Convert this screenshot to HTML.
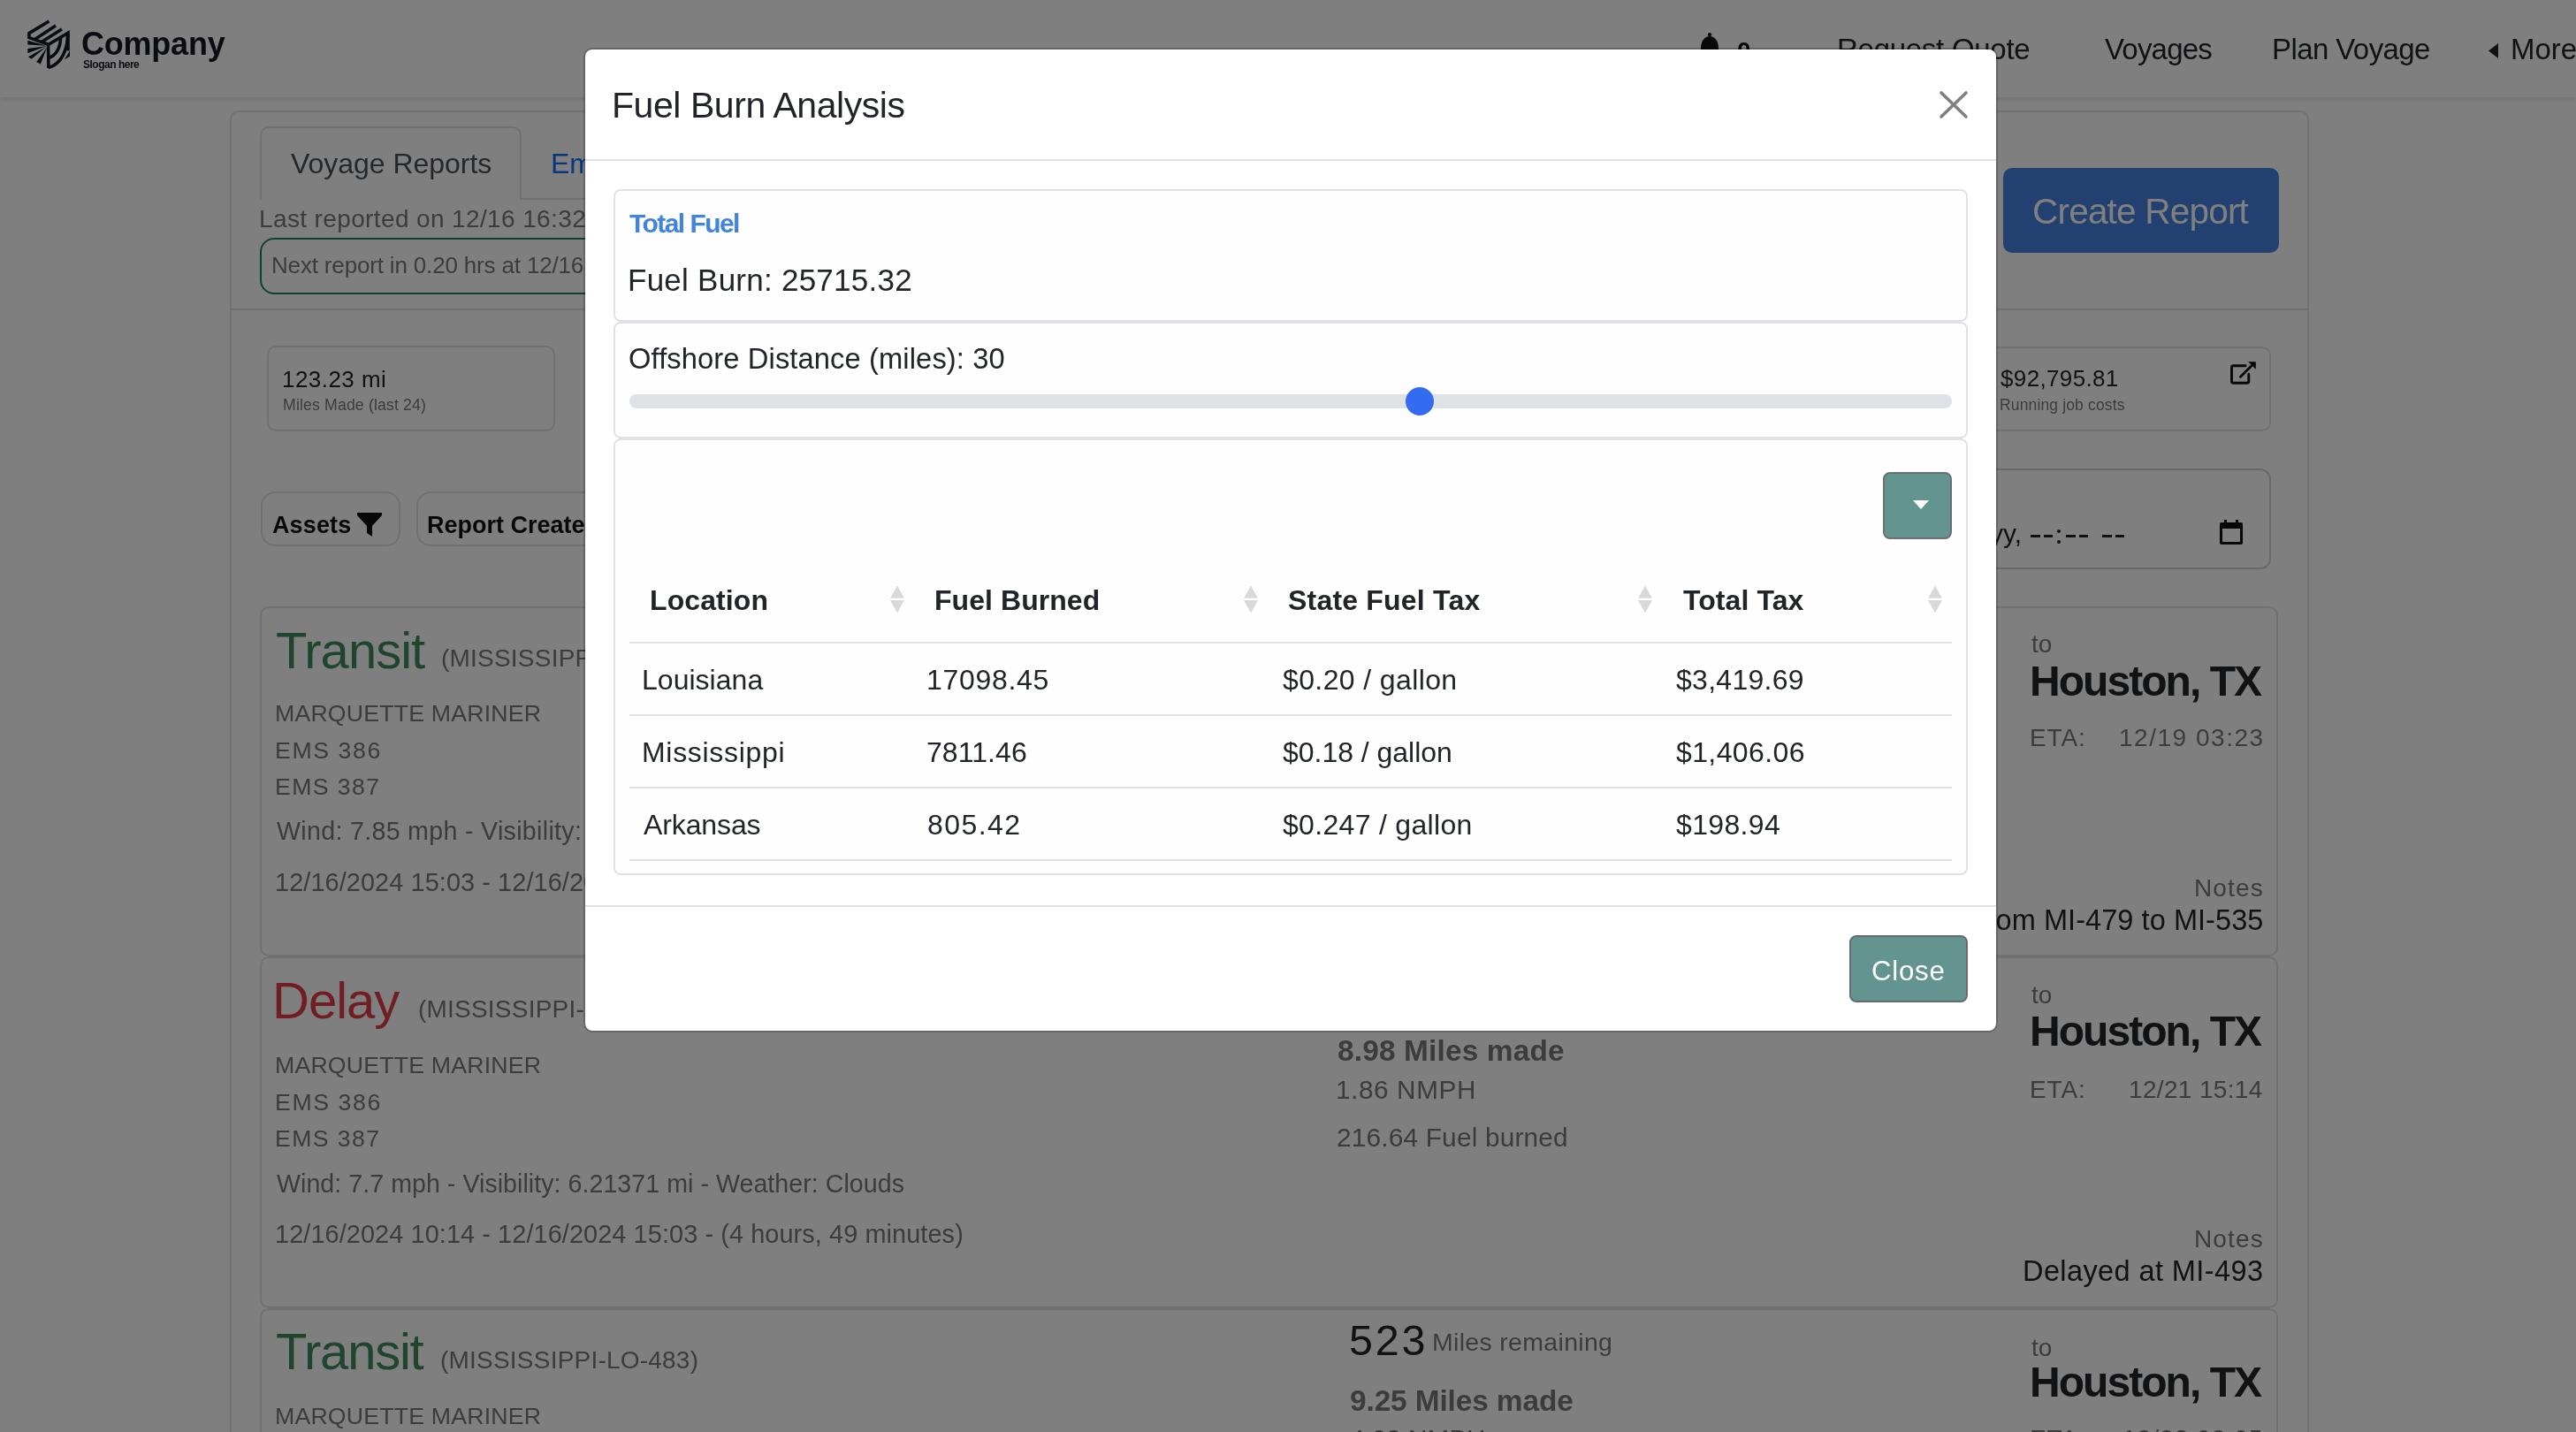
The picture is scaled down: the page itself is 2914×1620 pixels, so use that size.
<!DOCTYPE html><html><head><meta charset="utf-8"><style>
html,body{margin:0;padding:0;width:2914px;height:1620px;overflow:hidden;background:#fff;}
body{position:relative;font-family:"Liberation Sans",sans-serif;}
.t{position:absolute;white-space:nowrap;will-change:transform;}
.r{position:absolute;box-sizing:border-box;}
svg{position:absolute;overflow:visible;}
</style></head><body>
<script>(function(){var w=window.innerWidth;if(w&&Math.abs(w-2914)>2){document.documentElement.style.zoom=(w/2914);}})();</script>
<div class="r" style="left:0px;top:0px;width:2914px;height:110px;background:#fff;box-shadow:0 3px 6px rgba(0,0,0,0.10);"></div>
<div class="r" style="left:19px;top:14px;width:244px;height:79px;background:#fff;border-radius:16px;"></div>
<svg width="60" height="64" viewBox="0 0 60 64" style="left:26px;top:18px">
<g fill="none" stroke="#141922" stroke-width="3.6" stroke-linejoin="miter">
<polyline points="29.5,6 6.9,19.6 6.9,24.6 28.6,32.3"/>
<line x1="13.5" y1="26.5" x2="37" y2="11"/>
<line x1="21" y1="29.5" x2="44" y2="15"/>
<polyline points="28.6,32.5 51,19.2 51,39.5"/>
<line x1="28.6" y1="33" x2="28.9" y2="59"/>
<path d="M50.6,20 C50.5,38 44,54 28.9,58.5"/>
<path d="M42.6,24 C42.5,35 38,45 29,47.5"/>
</g>
<g fill="#141922">
<polygon points="26.8,33.8 5.3,27.7 5.3,32.5"/>
<polygon points="26.8,34 5.3,37 5.3,42.2"/>
<polygon points="27,34.5 5.8,46.2 9.6,48.8"/>
<polygon points="27.5,35 15.2,52 19.8,54.6"/>
<polygon points="46.8,49.5 53,39.3 53,45.8"/>
</g>
</svg>
<div class="t" style="left:91.5px;top:31.8px;font-size:36px;line-height:36px;color:#141922;font-weight:bold;letter-spacing:-0.217px;">Company</div>
<div class="t" style="left:93.6px;top:66.8px;font-size:12px;line-height:12px;color:#141922;font-weight:bold;letter-spacing:-0.490px;">Slogan here</div>
<svg style="left:1920px;top:34px" width="28" height="34" viewBox="0 0 28 34">
<g fill="#111"><circle cx="14" cy="5.2" r="2.1"/><path d="M4,21 C4,12 8.5,7 14,7 C19.5,7 24,12 24,21 L24,34 L4,34 Z"/></g></svg>
<div class="t" style="left:1964.5px;top:43.8px;font-size:28px;line-height:28px;color:#111;font-weight:bold;">0</div>
<div class="t" style="left:2077.8px;top:38.7px;font-size:33px;line-height:33px;color:#212529;letter-spacing:-0.275px;">Request Quote</div>
<div class="t" style="left:2381.1px;top:38.7px;font-size:33px;line-height:33px;color:#212529;letter-spacing:-0.817px;">Voyages</div>
<div class="t" style="left:2569.6px;top:38.7px;font-size:33px;line-height:33px;color:#212529;letter-spacing:-0.590px;">Plan Voyage</div>
<svg style="left:2815px;top:49px" width="11" height="17" viewBox="0 0 11 17"><polygon points="11,0 11,17 0,8.5" fill="#212529"/></svg>
<div class="t" style="left:2840.3px;top:38.7px;font-size:33px;line-height:33px;color:#212529;">More</div>
<div class="r" style="left:260px;top:125px;width:2352px;height:1575px;border:2px solid #dee2e6;border-radius:10px;"></div>
<div class="r" style="left:262px;top:349px;width:2348px;height:2px;background:#dee2e6;"></div>
<div class="r" style="left:590px;top:224px;width:910px;height:2px;background:#dee2e6;"></div>
<div class="r" style="left:294px;top:143px;width:296px;height:83px;border:2px solid #dee2e6;border-bottom:none;border-radius:10px 10px 0 0;background:#fff;"></div>
<div class="t" style="left:328.8px;top:169.4px;font-size:32px;line-height:32px;color:#495057;letter-spacing:-0.031px;">Voyage Reports</div>
<div class="t" style="left:623.4px;top:169.4px;font-size:32px;line-height:32px;color:#0d6efd;">Emissions</div>
<div class="t" style="left:293.2px;top:233.9px;font-size:28px;line-height:28px;color:#787878;letter-spacing:0.374px;">Last reported on 12/16 16:32</div>
<div class="r" style="left:294px;top:269px;width:706px;height:64px;border:2px solid #198754;border-radius:16px;"></div>
<div class="t" style="left:306.9px;top:287.0px;font-size:26px;line-height:26px;color:#787878;letter-spacing:-0.165px;">Next report in 0.20 hrs at 12/16 16:44</div>
<div class="r" style="left:2266px;top:190px;width:312px;height:96px;background:#4482e0;border-radius:10px;"></div>
<div class="t" style="left:2299.0px;top:218.7px;font-size:40.5px;line-height:40.5px;color:#fff;letter-spacing:-0.792px;">Create Report</div>
<div class="r" style="left:302px;top:391px;width:326px;height:97px;border:2px solid #dee2e6;border-radius:10px;"></div>
<div class="t" style="left:319.0px;top:415.7px;font-size:26px;line-height:26px;color:#212529;letter-spacing:0.450px;">123.23 mi</div>
<div class="t" style="left:319.6px;top:450.0px;font-size:17.7px;line-height:17.7px;color:#787878;letter-spacing:0.142px;">Miles Made (last 24)</div>
<div class="r" style="left:2200px;top:392px;width:369px;height:96px;border:2px solid #dee2e6;border-radius:10px;"></div>
<div class="t" style="left:2262.7px;top:415.3px;font-size:26px;line-height:26px;color:#212529;letter-spacing:0.356px;">$92,795.81</div>
<div class="t" style="left:2261.6px;top:449.8px;font-size:17.5px;line-height:17.5px;color:#787878;letter-spacing:0.144px;">Running job costs</div>
<svg style="left:2510px;top:400px" width="50" height="40" viewBox="0 0 50 40">
<g fill="none" stroke="#111" stroke-width="2.9" stroke-linecap="round" stroke-linejoin="round">
<path d="M30,13.7 L16.2,13.7 Q14.5,13.7 14.5,15.4 L14.5,31.5 Q14.5,33.2 16.2,33.2 L32.1,33.2 Q33.8,33.2 33.8,31.5 L33.8,23.5"/>
<path d="M24.5,26.3 L37,13.8"/>
</g>
<polygon points="33.2,9.3 41.8,9.3 41.8,17.8" fill="#111"/></svg>
<div class="r" style="left:295px;top:556px;width:158px;height:62px;border:2px solid #dee2e6;border-radius:16px;"></div>
<div class="t" style="left:308.3px;top:581.1px;font-size:27px;line-height:27px;color:#111;font-weight:bold;letter-spacing:0.120px;">Assets</div>
<svg style="left:404px;top:580px" width="28" height="28" viewBox="0 0 28 28"><path d="M0,0 L28,0 L28,3 L17,15 L17,27 L11,23 L11,15 L0,3 Z" fill="#111"/></svg>
<div class="r" style="left:471px;top:556px;width:429px;height:62px;border:2px solid #dee2e6;border-radius:16px;"></div>
<div class="t" style="left:483.2px;top:581.1px;font-size:27px;line-height:27px;color:#111;font-weight:bold;">Report Created</div>
<div class="r" style="left:2100px;top:530px;width:469px;height:114px;border:2px solid #ced4da;border-radius:12px;"></div>
<div class="t" style="left:2120.6px;top:589.2px;font-size:30px;line-height:30px;color:#212529;">mm/dd/yyyy,</div>
<div class="r" style="left:2297px;top:604.5px;width:10.599999999999909px;height:3.0px;background:#212529;"></div>
<div class="r" style="left:2311.5px;top:604.5px;width:10.599999999999909px;height:3.0px;background:#212529;"></div>
<div class="r" style="left:2337px;top:604.5px;width:10.599999999999909px;height:3.0px;background:#212529;"></div>
<div class="r" style="left:2351.5px;top:604.5px;width:10.599999999999909px;height:3.0px;background:#212529;"></div>
<div class="r" style="left:2378px;top:604.5px;width:10.599999999999909px;height:3.0px;background:#212529;"></div>
<div class="r" style="left:2392.5px;top:604.5px;width:10.599999999999909px;height:3.0px;background:#212529;"></div>
<div class="r" style="left:2326.5px;top:599px;width:4.0px;height:4px;background:#212529;border-radius:50%;"></div>
<div class="r" style="left:2326.5px;top:611px;width:4.0px;height:4px;background:#212529;border-radius:50%;"></div>
<svg style="left:2511px;top:588px" width="26" height="28" viewBox="0 0 26 28">
<g fill="#111"><rect x="5" y="0" width="3" height="5"/><rect x="18" y="0" width="3" height="5"/>
<path d="M2,3 L24,3 Q26,3 26,5 L26,26 Q26,28 24,28 L2,28 Q0,28 0,26 L0,5 Q0,3 2,3 Z M3,10 L3,25 L23,25 L23,10 Z" fill-rule="evenodd"/></g></svg>
<div class="r" style="left:294px;top:686px;width:2283px;height:396px;border:2px solid #dee2e6;border-radius:10px;"></div>
<div class="t" style="left:311.7px;top:706.9px;font-size:58px;line-height:58px;color:#3f8a5c;letter-spacing:-0.983px;">Transit</div>
<div class="t" style="left:498.8px;top:731.3px;font-size:28px;line-height:28px;color:#787878;letter-spacing:0.216px;">(MISSISSIPPI-LO-481)</div>
<div class="t" style="left:310.8px;top:794.4px;font-size:26.7px;line-height:26.7px;color:#787878;letter-spacing:0.188px;">MARQUETTE MARINER</div>
<div class="t" style="left:310.8px;top:835.9px;font-size:26.7px;line-height:26.7px;color:#787878;letter-spacing:1.583px;">EMS 386</div>
<div class="t" style="left:310.8px;top:877.4px;font-size:26.7px;line-height:26.7px;color:#787878;letter-spacing:1.367px;">EMS 387</div>
<div class="t" style="left:312.9px;top:925.8px;font-size:28.6px;line-height:28.6px;color:#787878;letter-spacing:0.316px;">Wind: 7.85 mph - Visibility: 6.21371 mi - Weather: Clear</div>
<div class="t" style="left:310.8px;top:983.5px;font-size:28.9px;line-height:28.9px;color:#787878;letter-spacing:0.079px;">12/16/2024 15:03 - 12/16/2024 16:32 - (1 hours, 29 minutes)</div>
<div class="r" style="left:294px;top:1082px;width:2283px;height:398px;border:2px solid #dee2e6;border-radius:10px;"></div>
<div class="t" style="left:308.3px;top:1103.3px;font-size:58px;line-height:58px;color:#e03a46;letter-spacing:-1.000px;">Delay</div>
<div class="t" style="left:472.7px;top:1127.7px;font-size:28px;line-height:28px;color:#787878;letter-spacing:0.216px;">(MISSISSIPPI-LO-482)</div>
<div class="t" style="left:310.8px;top:1192.0px;font-size:26.7px;line-height:26.7px;color:#787878;letter-spacing:0.188px;">MARQUETTE MARINER</div>
<div class="t" style="left:310.8px;top:1233.5px;font-size:26.7px;line-height:26.7px;color:#787878;letter-spacing:1.583px;">EMS 386</div>
<div class="t" style="left:310.8px;top:1275.0px;font-size:26.7px;line-height:26.7px;color:#787878;letter-spacing:1.367px;">EMS 387</div>
<div class="t" style="left:312.9px;top:1324.8px;font-size:28.6px;line-height:28.6px;color:#787878;letter-spacing:0.040px;">Wind: 7.7 mph - Visibility: 6.21371 mi - Weather: Clouds</div>
<div class="t" style="left:310.8px;top:1381.7px;font-size:28.9px;line-height:28.9px;color:#787878;letter-spacing:0.079px;">12/16/2024 10:14 - 12/16/2024 15:03 - (4 hours, 49 minutes)</div>
<div class="r" style="left:294px;top:1480px;width:2283px;height:396px;border:2px solid #dee2e6;border-radius:10px;"></div>
<div class="t" style="left:311.7px;top:1500.4px;font-size:58px;line-height:58px;color:#3f8a5c;letter-spacing:-1.233px;">Transit</div>
<div class="t" style="left:498.0px;top:1524.8px;font-size:28px;line-height:28px;color:#787878;letter-spacing:0.216px;">(MISSISSIPPI-LO-483)</div>
<div class="t" style="left:310.8px;top:1589.2px;font-size:26.7px;line-height:26.7px;color:#787878;letter-spacing:0.188px;">MARQUETTE MARINER</div>
<div class="t" style="left:310.8px;top:1630.7px;font-size:26.7px;line-height:26.7px;color:#787878;letter-spacing:1.583px;">EMS 386</div>
<div class="t" style="left:310.8px;top:1672.2px;font-size:26.7px;line-height:26.7px;color:#787878;letter-spacing:1.367px;">EMS 387</div>
<div class="t" style="left:312.9px;top:1720.8px;font-size:28.6px;line-height:28.6px;color:#787878;letter-spacing:0.040px;">Wind: 7.7 mph - Visibility: 6.21371 mi - Weather: Clouds</div>
<div class="t" style="left:310.8px;top:1778.5px;font-size:28.9px;line-height:28.9px;color:#787878;letter-spacing:0.079px;">12/16/2024 05:00 - 12/16/2024 10:14 - (5 hours, 14 minutes)</div>
<div class="t" style="left:2298.1px;top:715.0px;font-size:28px;line-height:28px;color:#787878;">to</div>
<div class="t" style="left:2295.8px;top:746.8px;font-size:48px;line-height:48px;color:#212529;font-weight:bold;letter-spacing:-1.950px;">Houston, TX</div>
<div class="t" style="left:2296.2px;top:821.3px;font-size:28px;line-height:28px;color:#787878;letter-spacing:0.900px;">ETA:</div>
<div class="t" style="left:2396.6px;top:821.3px;font-size:28px;line-height:28px;color:#787878;letter-spacing:1.520px;">12/19 03:23</div>
<div class="t" style="left:2481.8px;top:990.5px;font-size:28px;line-height:28px;color:#787878;letter-spacing:1.150px;">Notes</div>
<div class="t" style="left:2129.5px;top:1024.7px;font-size:32.5px;line-height:32.5px;color:#212529;letter-spacing:0.061px;">Transit from MI-479 to MI-535</div>
<div class="t" style="left:2298.1px;top:1111.8px;font-size:28px;line-height:28px;color:#787878;">to</div>
<div class="t" style="left:2295.8px;top:1143.2px;font-size:48px;line-height:48px;color:#212529;font-weight:bold;letter-spacing:-1.950px;">Houston, TX</div>
<div class="t" style="left:2296.2px;top:1219.4px;font-size:28px;line-height:28px;color:#787878;letter-spacing:0.900px;">ETA:</div>
<div class="t" style="left:2408.0px;top:1219.4px;font-size:28px;line-height:28px;color:#787878;letter-spacing:0.340px;">12/21 15:14</div>
<div class="t" style="left:2481.8px;top:1388.1px;font-size:28px;line-height:28px;color:#787878;letter-spacing:1.150px;">Notes</div>
<div class="t" style="left:2287.8px;top:1422.3px;font-size:32.5px;line-height:32.5px;color:#212529;letter-spacing:0.406px;">Delayed at MI-493</div>
<div class="t" style="left:2298.1px;top:1511.1px;font-size:28px;line-height:28px;color:#787878;">to</div>
<div class="t" style="left:2295.8px;top:1539.9px;font-size:48px;line-height:48px;color:#212529;font-weight:bold;letter-spacing:-1.950px;">Houston, TX</div>
<div class="t" style="left:2296.2px;top:1614.3px;font-size:28px;line-height:28px;color:#787878;letter-spacing:0.900px;">ETA:</div>
<div class="t" style="left:2401.4px;top:1614.3px;font-size:28px;line-height:28px;color:#787878;letter-spacing:1.040px;">12/22 03:05</div>
<div class="t" style="left:1512.7px;top:1172.1px;font-size:33.4px;line-height:33.4px;color:#787878;font-weight:bold;letter-spacing:0.164px;">8.98 Miles made</div>
<div class="t" style="left:1511.4px;top:1218.0px;font-size:29.7px;line-height:29.7px;color:#787878;letter-spacing:0.613px;">1.86 NMPH</div>
<div class="t" style="left:1512.2px;top:1271.8px;font-size:29.8px;line-height:29.8px;color:#787878;letter-spacing:0.188px;">216.64 Fuel burned</div>
<div class="t" style="left:1525.9px;top:1492.4px;font-size:48.5px;line-height:48.5px;color:#212529;letter-spacing:2.750px;">523</div>
<div class="t" style="left:1620.3px;top:1504.3px;font-size:28.5px;line-height:28.5px;color:#787878;letter-spacing:0.314px;">Miles remaining</div>
<div class="t" style="left:1526.7px;top:1568.4px;font-size:33.4px;line-height:33.4px;color:#787878;font-weight:bold;letter-spacing:-0.107px;">9.25 Miles made</div>
<div class="t" style="left:1527.1px;top:1612.9px;font-size:29.7px;line-height:29.7px;color:#787878;">4.23 NMPH</div>
<div class="r" style="left:0px;top:0px;width:2914px;height:1620px;background:rgba(0,0,0,0.5);"></div>
<div class="r" style="left:660px;top:54px;width:1600px;height:1114px;background:#fff;border:2px solid rgba(0,0,0,0.2);border-radius:10px;background-clip:padding-box;"></div>
<div class="r" style="left:662px;top:180px;width:1596px;height:2px;background:#dee2e6;"></div>
<div class="t" style="left:691.6px;top:99.1px;font-size:41px;line-height:41px;color:#212529;letter-spacing:-0.447px;">Fuel Burn Analysis</div>
<svg style="left:2194px;top:103px" width="32" height="31" viewBox="0 0 32 31"><g stroke="#808080" stroke-width="3.6" stroke-linecap="round"><line x1="2" y1="2" x2="30" y2="29"/><line x1="30" y1="2" x2="2" y2="29"/></g></svg>
<div class="r" style="left:694px;top:214px;width:1532px;height:150px;border:2px solid #dee2e6;border-radius:8px;background:#fefefe;"></div>
<div class="t" style="left:712.1px;top:238.3px;font-size:30px;line-height:30px;color:#4283dc;font-weight:bold;letter-spacing:-1.556px;">Total Fuel</div>
<div class="t" style="left:710.1px;top:298.9px;font-size:35px;line-height:35px;color:#212529;letter-spacing:0.250px;">Fuel Burn: 25715.32</div>
<div class="r" style="left:694px;top:364px;width:1532px;height:132px;border:2px solid #dee2e6;border-radius:8px;background:#fefefe;"></div>
<div class="t" style="left:711.1px;top:389.5px;font-size:32.7px;line-height:32.7px;color:#212529;letter-spacing:0.107px;">Offshore Distance (miles): 30</div>
<div class="r" style="left:712px;top:446px;width:1496px;height:16px;background:#dee2e6;border-radius:8px;"></div>
<div class="r" style="left:1590px;top:438px;width:32px;height:32px;background:#336cf0;border-radius:50%;"></div>
<div class="r" style="left:694px;top:496px;width:1532px;height:494px;border:2px solid #dee2e6;border-radius:8px;background:#fefefe;"></div>
<div class="r" style="left:2130px;top:534px;width:78px;height:76px;background:#64948f;border:2px solid #6a6e75;border-radius:8px;"></div>
<svg style="left:2164px;top:566px" width="18" height="10" viewBox="0 0 18 10"><polygon points="0,0 18,0 9,10" fill="#fff"/></svg>
<div class="t" style="left:735.4px;top:663.1px;font-size:32px;line-height:32px;color:#212529;font-weight:bold;letter-spacing:0.100px;">Location</div>
<div class="t" style="left:1056.7px;top:663.1px;font-size:32px;line-height:32px;color:#212529;font-weight:bold;letter-spacing:0.060px;">Fuel Burned</div>
<div class="t" style="left:1457.1px;top:663.1px;font-size:32px;line-height:32px;color:#212529;font-weight:bold;letter-spacing:0.200px;">State Fuel Tax</div>
<div class="t" style="left:1904.3px;top:663.1px;font-size:32px;line-height:32px;color:#212529;font-weight:bold;letter-spacing:0.075px;">Total Tax</div>
<svg style="left:1006px;top:660px" width="18" height="36" viewBox="0 0 18 36"><g fill="#d9d9d9"><polygon points="9,2.5 17,16.7 1,16.7"/><polygon points="1,19 17,19 9,33.4"/></g></svg>
<svg style="left:1406px;top:660px" width="18" height="36" viewBox="0 0 18 36"><g fill="#d9d9d9"><polygon points="9,2.5 17,16.7 1,16.7"/><polygon points="1,19 17,19 9,33.4"/></g></svg>
<svg style="left:1852px;top:660px" width="18" height="36" viewBox="0 0 18 36"><g fill="#d9d9d9"><polygon points="9,2.5 17,16.7 1,16.7"/><polygon points="1,19 17,19 9,33.4"/></g></svg>
<svg style="left:2180px;top:660px" width="18" height="36" viewBox="0 0 18 36"><g fill="#d9d9d9"><polygon points="9,2.5 17,16.7 1,16.7"/><polygon points="1,19 17,19 9,33.4"/></g></svg>
<div class="r" style="left:712px;top:726px;width:1496px;height:2px;background:#dee2e6;"></div>
<div class="r" style="left:712px;top:808px;width:1496px;height:2px;background:#dee2e6;"></div>
<div class="r" style="left:712px;top:890px;width:1496px;height:2px;background:#dee2e6;"></div>
<div class="r" style="left:712px;top:972px;width:1496px;height:2px;background:#dee2e6;"></div>
<div class="t" style="left:725.8px;top:752.9px;font-size:32px;line-height:32px;color:#212529;letter-spacing:0.025px;">Louisiana</div>
<div class="t" style="left:1047.6px;top:752.9px;font-size:32px;line-height:32px;color:#212529;letter-spacing:0.686px;">17098.45</div>
<div class="t" style="left:1450.7px;top:752.9px;font-size:32px;line-height:32px;color:#212529;letter-spacing:0.385px;">$0.20 / gallon</div>
<div class="t" style="left:1896.4px;top:752.9px;font-size:32px;line-height:32px;color:#212529;letter-spacing:0.275px;">$3,419.69</div>
<div class="t" style="left:725.8px;top:834.9px;font-size:32px;line-height:32px;color:#212529;letter-spacing:0.700px;">Mississippi</div>
<div class="t" style="left:1048.4px;top:834.9px;font-size:32px;line-height:32px;color:#212529;letter-spacing:0.067px;">7811.46</div>
<div class="t" style="left:1450.7px;top:834.9px;font-size:32px;line-height:32px;color:#212529;letter-spacing:-0.023px;">$0.18 / gallon</div>
<div class="t" style="left:1896.4px;top:834.9px;font-size:32px;line-height:32px;color:#212529;letter-spacing:0.388px;">$1,406.06</div>
<div class="t" style="left:728.3px;top:916.9px;font-size:32px;line-height:32px;color:#212529;letter-spacing:-0.114px;">Arkansas</div>
<div class="t" style="left:1048.6px;top:916.9px;font-size:32px;line-height:32px;color:#212529;letter-spacing:1.420px;">805.42</div>
<div class="t" style="left:1450.7px;top:916.9px;font-size:32px;line-height:32px;color:#212529;letter-spacing:0.314px;">$0.247 / gallon</div>
<div class="t" style="left:1896.4px;top:916.9px;font-size:32px;line-height:32px;color:#212529;letter-spacing:0.350px;">$198.94</div>
<div class="r" style="left:662px;top:1024px;width:1596px;height:2px;background:#dee2e6;"></div>
<div class="r" style="left:2092px;top:1058px;width:134px;height:76px;background:#64948f;border:2px solid #666a73;border-radius:8px;"></div>
<div class="t" style="left:2117.4px;top:1082.6px;font-size:31.2px;line-height:31.2px;color:#fff;letter-spacing:0.750px;">Close</div>
</body></html>
